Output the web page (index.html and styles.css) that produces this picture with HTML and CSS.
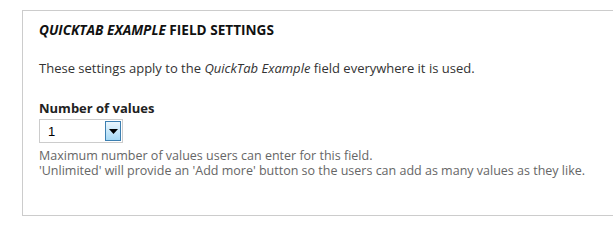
FILE: index.html
```html
<!DOCTYPE html>
<html>
<head>
<meta charset="utf-8">
<link rel="stylesheet" href="styles.css">
</head>
<body>
<div class="panel">
  <h2 class="title"><em>QUICKTAB EXAMPLE</em> FIELD SETTINGS</h2>
  <p class="intro">These settings apply to the <em>QuickTab Example</em> field everywhere it is used.</p>
  <div class="field">
    <label class="label">Number of values</label>
    <div class="select">
      <span class="value">1</span>
      <span class="arrow"><svg width="9" height="5" viewBox="0 0 9 5"><path d="M0 0H9L4.5 5Z" fill="#000"/></svg></span>
    </div>
    <div class="desc">
      <div class="desc-line">Maximum number of values users can enter for this field.</div>
      <div class="desc-line">'Unlimited' will provide an 'Add more' button so the users can add as many values as they like.</div>
    </div>
  </div>
</div>
</body>
</html>
```
FILE: styles.css
```css
html, body { margin: 0; padding: 0; background: #fff; }
body { font-family: "Open Sans", "Noto Sans", sans-serif; color: #333; }
.panel {
  margin: 10px 0 0 22px;
  height: 206px;
  border: 1px solid #ccc;
  border-right: none;
  box-sizing: border-box;
  padding: 10px 0 0 16px;
}
.title { margin: 0; font-size: 13.6px; font-weight: 700; color: #111; line-height: 18px; }
.intro { margin: 20px 0 0; font-size: 13px; line-height: 18px; color: #333; }
.field { margin-top: 23px; }
.label { display: block; font-size: 13px; font-weight: 700; line-height: 16px; color: #222; }
.select {
  margin-top: 3px;
  width: 84px; height: 24px;
  border: 1px solid #ccc;
  box-sizing: border-box;
  display: flex; align-items: center; justify-content: space-between;
  padding: 0 1px 0 8px;
}
.value { font-family: "Liberation Sans", sans-serif; font-size: 13px; color: #000; }
.arrow {
  width: 16px; height: 20px; box-sizing: border-box;
  border: 1px solid #3c7fb1;
  background: linear-gradient(#eaf6fd, #a7d9f5);
  display: flex; align-items: center; justify-content: center;
}
.desc { margin-top: 5px; font-size: 12.5px; color: #666; }
.desc-line { line-height: 15px; white-space: nowrap; }
```
